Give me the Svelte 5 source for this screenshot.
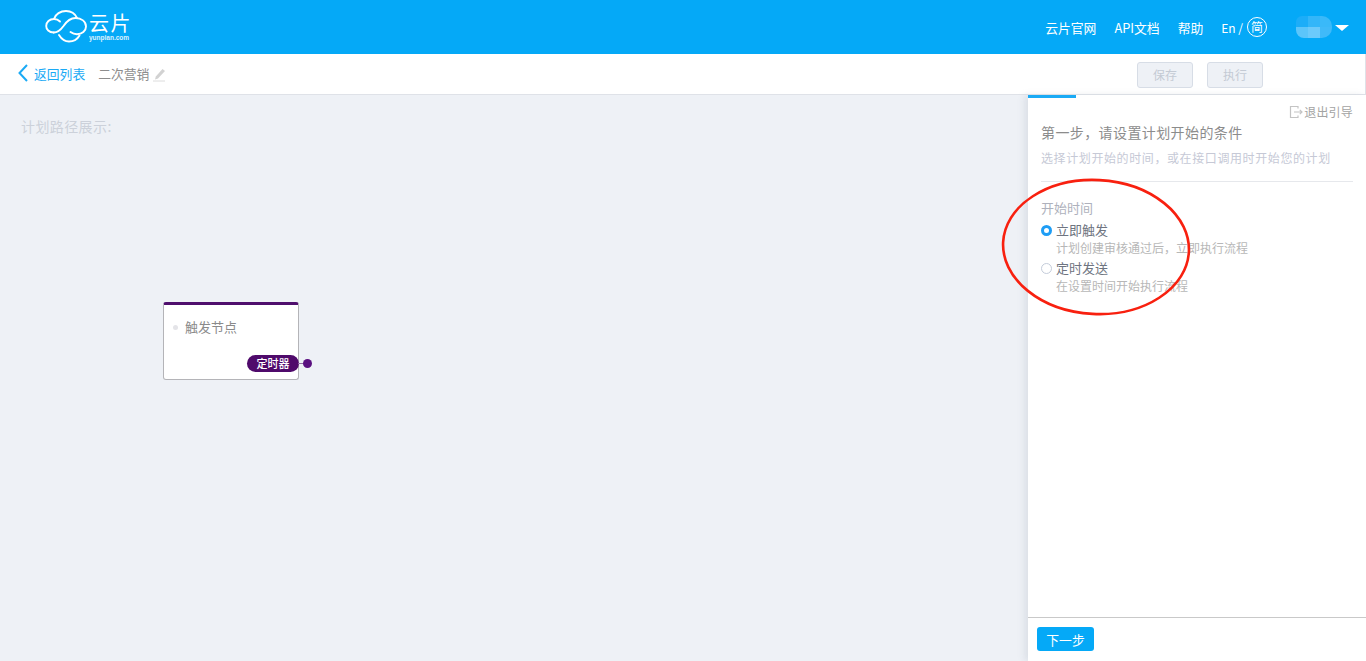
<script lang="ts">
const navLinks = ["云片官网", "API文档", "帮助"];
const options = [
  { label: "立即触发", hint: "计划创建审核通过后，立即执行流程", checked: true },
  { label: "定时发送", hint: "在设置时间开始执行流程", checked: false },
];
const mosaic = ["#1cadf8", "#33b6f9", "#3ab9f9", "#5cc5fa", "#6ccafb", "#40baf9"];
</script>

<div class="page">
  <header class="topbar">
    <div class="logo">
      <svg class="cloud" viewBox="0 0 42 34" width="42" height="34" fill="none" stroke="#fff" stroke-width="1.900" stroke-linecap="round">
        <path d="M8.700 22.500C4 22.500 1.200 19.500 1.200 16 1.200 12 4.500 9 9 9 10.500 4 15.500 1 21 1 26 1 30 3.500 32 8" />
        <path d="M8.700 22.500C13 22.500 16 19.500 18.500 16 21.500 11.500 25 8 30.500 8 36.500 8 41 11.500 41 16.500 41 21 37 24.300 32 24.300 29.500 24.300 27.500 23.500 25.500 22" />
        <path d="M9 9C11.500 9 13.500 10 15 11.500" />
        <path d="M14 25C16.500 29 20 31.500 24 31.500 28.500 31.500 32.500 29 34.500 25.500" />
      </svg>
      <div class="logo-text">
        <span class="logo-name">云片</span>
        <span class="logo-url">yunpian.com</span>
      </div>
    </div>
    <nav class="nav">
      {#each navLinks as link}
        <span>{link}</span>
      {/each}
      <span class="lang">En /<i>简</i></span>
      <span class="user">
        <span class="blur">
          {#each mosaic as c}
            <b style="background: {c}"></b>
          {/each}
        </span>
        <span class="caret"></span>
      </span>
    </nav>
  </header>

  <div class="toolbar">
    <svg class="back" viewBox="0 0 10 18" width="10" height="18" fill="none" stroke="#1aaaf5" stroke-width="2">
      <path d="M9 1 1.500 9 9 17" />
    </svg>
    <span class="back-text">返回列表</span>
    <span class="plan-name">二次营销</span>
    <svg class="pencil" viewBox="0 0 13 14" width="13" height="14">
      <path d="M9.500 1 12 3 5 10.500 2 11.500 2.800 8.500Z" fill="#d2d2d2" />
      <path d="M0 13H12" stroke="#dcdcdc" stroke-width="1" />
    </svg>
    <div class="actions">
      <button disabled>保存</button>
      <button disabled>执行</button>
    </div>
  </div>

  <main class="content">
    <section class="canvas">
      <p class="canvas-title">计划路径展示:</p>
      <div class="node">
        <div class="node-label"><span class="dot"></span>触发节点</div>
        <span class="tag">定时器</span>
        <span class="link"></span>
      </div>
    </section>

    <aside class="guide">
      <div class="progress"></div>
      <div class="guide-body">
        <div class="exit">
          <svg viewBox="0 0 14 14" width="14" height="14" fill="none" stroke="#c4c4c4" stroke-width="1.200">
            <path d="M9 3.500V1.500H1.500V12.500H9V10.500" />
            <path d="M5 7H13M10.800 4.800 13 7 10.800 9.200" />
          </svg>
          退出引导
        </div>
        <h2>第一步，请设置计划开始的条件</h2>
        <p class="sub">选择计划开始的时间，或在接口调用时开始您的计划</p>
        <hr />
        <div class="field-label">开始时间</div>
        {#each options as opt}
          <div class="option">
            <span class="radio" class:checked={opt.checked}></span>
            <div>
              <div class="opt-label">{opt.label}</div>
              <div class="opt-hint">{opt.hint}</div>
            </div>
          </div>
        {/each}
      </div>
      <footer class="guide-foot">
        <button class="next">下一步</button>
      </footer>
    </aside>
  </main>

  <svg class="annotation" viewBox="0 0 200 146" width="200" height="146" fill="none">
    <ellipse cx="95" cy="71" rx="93" ry="67" stroke="#f8200f" stroke-width="2.600" transform="rotate(3 95 71)" />
  </svg>
</div>

<style>
:global(body) {
  margin: 0;
  background: #eef1f6;
}
.page {
  position: relative;
  height: 661px;
  overflow: hidden;
  display: flex;
  flex-direction: column;
  font-family: "Noto Sans CJK SC", "Noto Sans", sans-serif;
  font-size: 12.800px;
}

.topbar {
  height: 54px;
  flex: none;
  background: #05a9f7;
  color: #fff;
  display: flex;
  align-items: center;
  justify-content: space-between;
  padding: 0 17px 0 44px;
}
.logo {
  display: flex;
  align-items: center;
  gap: 2px;
}
.cloud {
  margin-left: 1px;
}
.logo-text {
  display: flex;
  flex-direction: column;
  align-items: flex-start;
  gap: 1px;
}
.logo-name {
  font-size: 20px;
  line-height: 20px;
  letter-spacing: 1.500px;
}
.logo-url {
  font-family: "Liberation Sans", sans-serif;
  font-size: 6.500px;
  font-weight: 700;
  line-height: 7px;
  opacity: 0.85;
}
.nav {
  display: flex;
  align-items: center;
  gap: 18px;
}
.lang {
  display: flex;
  align-items: center;
  gap: 4px;
  font-size: 12px;
}
.lang i {
  width: 20px;
  height: 20px;
  box-sizing: border-box;
  border: 1px solid #fff;
  border-radius: 50%;
  display: grid;
  place-items: center;
  font-style: normal;
  font-size: 12px;
  line-height: 1;
}
.user {
  display: flex;
  align-items: center;
  margin-left: 11px;
  gap: 3px;
}
.blur {
  width: 36px;
  height: 22px;
  display: grid;
  grid-template-columns: repeat(3, 1fr);
  border-radius: 6px 10px 10px 8px;
  overflow: hidden;
}
.caret {
  width: 0;
  height: 0;
  border: 7px solid transparent;
  border-top: 6px solid #fff;
  border-bottom: 0;
  margin-top: 1px;
}

.toolbar {
  height: 41px;
  flex: none;
  box-sizing: border-box;
  background: #fff;
  border-bottom: 1px solid #dfe2e8;
  border-right: 1px solid #dfe2e8;
  display: flex;
  align-items: center;
  padding: 1px 102px 0 18px;
}
.back {
  margin-bottom: 3px;
}
.back-text {
  color: #1aaaf5;
  margin: 0 0 2px 6px;
}
.plan-name {
  color: #8d8d8d;
  margin: 0 0 2px 13px;
}
.pencil {
  margin-left: 4px;
}
.actions {
  margin-left: auto;
  display: flex;
  gap: 14px;
}
.actions button {
  width: 56px;
  height: 26px;
  padding: 0;
  box-sizing: border-box;
  border: 1px solid #d7dde6;
  border-radius: 3px;
  background: #eef1f6;
  color: #c4cad4;
  font: inherit;
  font-size: 12px;
}

.content {
  flex: 1;
  display: flex;
  min-height: 0;
}
.canvas {
  flex: 1;
  position: relative;
  background: #eef1f6;
}
.canvas-title {
  margin: 22px 0 0 21px;
  color: #ccd1da;
  font-size: 14px;
  letter-spacing: 0.400px;
  line-height: 18px;
}
.node {
  position: absolute;
  left: 163px;
  top: 207px;
  width: 136px;
  height: 78px;
  box-sizing: border-box;
  background: #fff;
  border: 1px solid #b4b4b8;
  border-top: 3px solid #4f0f6d;
  border-radius: 3px;
}
.node-label {
  display: flex;
  align-items: center;
  margin: 13px 0 0 9px;
  color: #8a8a8a;
  font-size: 13px;
  line-height: 18px;
}
.dot {
  width: 5px;
  height: 5px;
  border-radius: 50%;
  background: #e4e4e8;
  margin-right: 7px;
}
.tag {
  position: absolute;
  right: -1px;
  top: 50px;
  width: 52px;
  height: 17px;
  border-radius: 9px;
  background: #4f0a6b;
  color: #fff;
  font-size: 11px;
  font-weight: 500;
  line-height: 17px;
  text-align: center;
}
.link {
  position: absolute;
  left: 134px;
  top: 58px;
  width: 6px;
  height: 1px;
  background: #8f6aa3;
}
.link::after {
  content: "";
  position: absolute;
  left: 5px;
  top: -4px;
  width: 9px;
  height: 9px;
  border-radius: 50%;
  background: #5a1080;
}

.guide {
  width: 338px;
  flex: none;
  background: #fff;
  box-shadow: -4px 0 6px rgba(200, 206, 216, 0.45);
  display: flex;
  flex-direction: column;
  position: relative;
}
.progress {
  position: absolute;
  left: 0;
  top: 0;
  width: 48px;
  height: 3px;
  background: #1aaaf5;
}
.guide-body {
  flex: 1;
  padding: 9px 13px 0 13px;
}
.exit {
  display: flex;
  justify-content: flex-end;
  align-items: center;
  gap: 1px;
  color: #a3a3a3;
  font-size: 12px;
  letter-spacing: 0.200px;
  line-height: 16px;
}
h2 {
  margin: 2px 0 0;
  color: #8c8c8c;
  font-size: 14px;
  letter-spacing: 0.400px;
  font-weight: 400;
  line-height: 20px;
}
.sub {
  margin: 7px 0 0;
  color: #c6c9d6;
  font-size: 12px;
  letter-spacing: 0.600px;
  line-height: 18px;
}
hr {
  margin: 14px 0 0;
  border: 0;
  border-top: 1px solid #e6e8ec;
}
.field-label {
  margin: 17px 0 4px;
  color: #aeb1bc;
  font-size: 13px;
  line-height: 18px;
}
.option {
  display: flex;
  gap: 4px;
}
.radio {
  width: 11px;
  height: 11px;
  box-sizing: border-box;
  margin-top: 4px;
  border: 1px solid #c4ccda;
  border-radius: 50%;
  background: #fff;
}
.radio.checked {
  border: 3.500px solid #1e9df5;
}
.opt-label {
  color: #6e7480;
  font-size: 13px;
  line-height: 18px;
}
.opt-hint {
  color: #b7b7b7;
  font-size: 12px;
  line-height: 18px;
  margin-bottom: 2px;
}
.guide-foot {
  height: 44px;
  flex: none;
  box-sizing: border-box;
  border-top: 1px solid #c9c9c9;
  padding: 9px 9px 0;
}
.next {
  display: block;
  width: 57px;
  height: 24px;
  padding: 0;
  border: 0;
  border-radius: 3px;
  background: #05a9f7;
  color: #fff;
  font: inherit;
  font-size: 12.800px;
}

.annotation {
  position: absolute;
  left: 1001px;
  top: 176px;
}
</style>
